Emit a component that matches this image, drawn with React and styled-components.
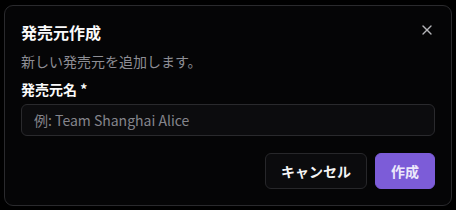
import React from "react";
import styled, { createGlobalStyle } from "styled-components";
import { X } from "lucide-react";

const Global = createGlobalStyle`
  html, body { margin: 0; padding: 0; background: #000; }
  body {
    font-family: "Noto Sans CJK JP", "Noto Sans", sans-serif;
    color: #fafafa;
    -webkit-font-smoothing: antialiased;
  }
  * { box-sizing: border-box; }
`;

const Screen = styled.div`
  width: 456px;
  height: 210px;
  padding: 5px 4px;
  background: #000;
`;

const Dialog = styled.div`
  position: relative;
  width: 448px;
  height: 201px;
  border: 1px solid #2a2a2d;
  border-radius: 9px;
  background: #050506;
  padding: 16px;
  display: flex;
  flex-direction: column;
`;

const Close = styled.button`
  position: absolute;
  top: 16px;
  right: 16px;
  width: 16px;
  height: 16px;
  padding: 0;
  border: none;
  background: none;
  color: #d4d4d8;
  display: flex;
  align-items: center;
  justify-content: center;
  opacity: 0.85;
`;

const Title = styled.h2`
  margin: 0;
  font-size: 16px;
  line-height: 20px;
  font-weight: 700;
  color: #fafafa;
`;

const Description = styled.p`
  margin: 9px 0 0;
  font-size: 14px;
  line-height: 20px;
  color: #8e8e95;
`;

const Field = styled.div`
  margin-top: 8px;
  display: flex;
  flex-direction: column;
  gap: 5px;
`;

const Label = styled.label`
  font-size: 14px;
  line-height: 20px;
  font-weight: 700;
  color: #fafafa;
`;

const Input = styled.input`
  height: 32px;
  width: 100%;
  border: 1px solid #2a2a2d;
  border-radius: 6px;
  background: #0c0c0e;
  padding: 0 12px;
  font-family: inherit;
  font-size: 14px;
  color: #fafafa;
  outline: none;
  &::placeholder { color: #85858c; }
`;

const Footer = styled.div`
  margin-top: 17px;
  display: flex;
  justify-content: flex-end;
  gap: 8px;
`;

const Button = styled.button`
  height: 36px;
  padding: 0 15px;
  border-radius: 6px;
  font-family: inherit;
  font-size: 14px;
  font-weight: 700;
  display: flex;
  align-items: center;
  border: 1px solid ${(p) => (p.$primary ? "#7c5cd8" : "#27272a")};
  background: ${(p) => (p.$primary ? "#7c5cd8" : "#0b0b0d")};
  color: ${(p) => (p.$primary ? "#ece8fb" : "#f4f4f5")};
`;

export default function App() {
  return (
    <>
      <Global />
      <Screen>
        <Dialog>
          <Close aria-label="閉じる">
            <X size={16} strokeWidth={2} />
          </Close>
          <Title>発売元作成</Title>
          <Description>新しい発売元を追加します。</Description>
          <Field>
            <Label>発売元名 *</Label>
            <Input placeholder="例: Team Shanghai Alice" />
          </Field>
          <Footer>
            <Button>キャンセル</Button>
            <Button $primary>作成</Button>
          </Footer>
        </Dialog>
      </Screen>
    </>
  );
}
